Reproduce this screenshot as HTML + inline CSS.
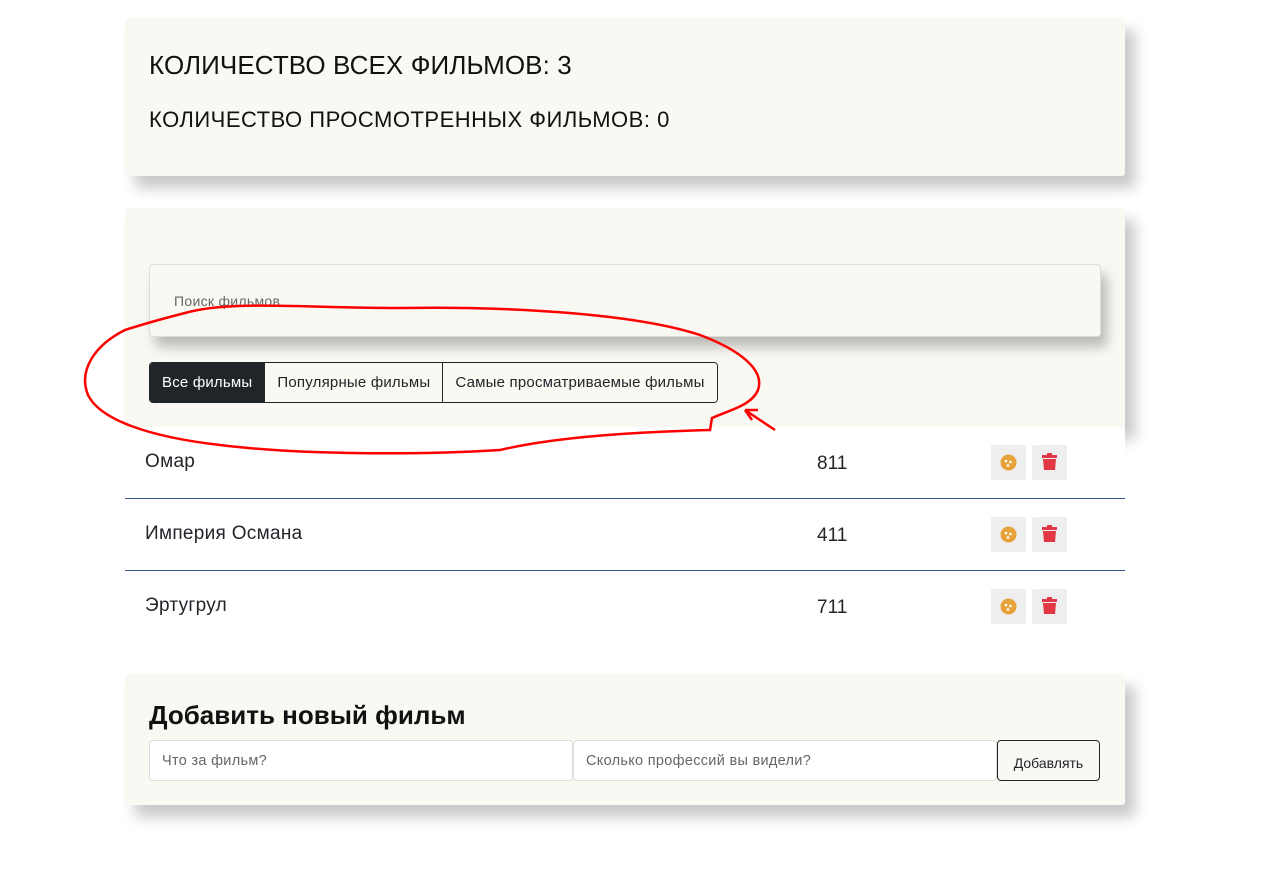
<!DOCTYPE html>
<html><head><meta charset="utf-8"><style>
*{box-sizing:border-box;margin:0;padding:0}
body{width:1283px;height:875px;background:#fff;font-family:"Liberation Sans","DejaVu Sans",sans-serif;color:#212529;position:relative;overflow:hidden}
.card{position:absolute;left:125px;width:1000px;background:#faf8f3;box-shadow:10px 12px 14px rgba(0,0,0,.22);border-radius:3px}
.t1{position:absolute;left:149px;top:50px;font-size:26px;color:#111;letter-spacing:.1px}
.t2{position:absolute;left:149px;top:107px;font-size:22px;color:#111;letter-spacing:.5px}
.search{position:absolute;left:149px;top:264px;width:952px;height:73px;background:#faf8f3;border:1px solid #dcdcdc;border-radius:4px;box-shadow:6px 10px 12px rgba(0,0,0,.25);font-size:14px;color:#666;padding:28px 0 0 24px;letter-spacing:.3px}
.btns{position:absolute;left:149px;top:362px;height:41px;display:flex;border:1px solid #212529;border-radius:4px;overflow:hidden;font-size:15px;letter-spacing:.2px}
.btns div{padding:0 12px;line-height:39px;border-left:1px solid #212529;background:#faf8f3}
.btns div:first-child{background:#212529;color:#fff;border-left:none}
.row{position:absolute;left:125px;width:1000px;height:72px;background:#fff}
.row .n{position:absolute;left:20px;top:24px;font-size:19px;letter-spacing:.3px}
.row .v{position:absolute;left:692px;top:26px;font-size:19px}
.ib{position:absolute;top:18px;width:35px;height:35px;background:#eee;border-radius:2px}
.line{position:absolute;left:125px;width:1000px;height:1px;background:#3a5a8f}
.h{position:absolute;left:149px;top:700px;font-size:26px;font-weight:bold;color:#111}
.in{position:absolute;top:740px;height:41px;background:#fff;border:1px solid #ddd;border-radius:4px;font-size:14.5px;color:#666;padding:12px 0 0 12px;letter-spacing:.3px}
.add{position:absolute;left:997px;top:740px;width:103px;height:41px;border:1px solid #212529;border-radius:4px;font-size:14px;text-align:center;line-height:44px;background:#faf8f3}
</style></head><body>
<div class="card" style="top:18px;height:158px"></div>
<div class="t1">КОЛИЧЕСТВО ВСЕХ ФИЛЬМОВ: 3</div>
<div class="t2">КОЛИЧЕСТВО ПРОСМОТРЕННЫХ ФИЛЬМОВ: 0</div>
<div class="card" style="top:208px;height:220px"></div>
<div class="search">Поиск фильмов</div>
<div class="btns"><div>Все фильмы</div><div>Популярные фильмы</div><div>Самые просматриваемые фильмы</div></div>

<div class="row" style="top:427px"><div class="n">Омар</div><div class="v">811</div>
<div class="ib" style="left:866px"><svg width="35" height="35"><circle cx="17.5" cy="17.5" r="8" fill="#e8a23a"/><circle cx="15" cy="16" r="1.3" fill="#fff"/><circle cx="19.5" cy="17" r="1.3" fill="#fff"/><circle cx="17" cy="20.5" r="1.3" fill="#fff"/></svg></div>
<div class="ib" style="left:907px"><svg width="35" height="35"><rect x="10" y="10" width="15" height="3" fill="#e23744"/><rect x="15" y="8" width="5" height="3" fill="#e23744"/><path d="M11 14h13l-1 11h-11z" fill="#e23744"/></svg></div></div>
<div class="line" style="top:498px"></div>
<div class="row" style="top:499px"><div class="n">Империя Османа</div><div class="v">411</div>
<div class="ib" style="left:866px"><svg width="35" height="35"><circle cx="17.5" cy="17.5" r="8" fill="#e8a23a"/><circle cx="15" cy="16" r="1.3" fill="#fff"/><circle cx="19.5" cy="17" r="1.3" fill="#fff"/><circle cx="17" cy="20.5" r="1.3" fill="#fff"/></svg></div>
<div class="ib" style="left:907px"><svg width="35" height="35"><rect x="10" y="10" width="15" height="3" fill="#e23744"/><rect x="15" y="8" width="5" height="3" fill="#e23744"/><path d="M11 14h13l-1 11h-11z" fill="#e23744"/></svg></div></div>
<div class="line" style="top:570px"></div>
<div class="row" style="top:571px"><div class="n">Эртугрул</div><div class="v">711</div>
<div class="ib" style="left:866px"><svg width="35" height="35"><circle cx="17.5" cy="17.5" r="8" fill="#e8a23a"/><circle cx="15" cy="16" r="1.3" fill="#fff"/><circle cx="19.5" cy="17" r="1.3" fill="#fff"/><circle cx="17" cy="20.5" r="1.3" fill="#fff"/></svg></div>
<div class="ib" style="left:907px"><svg width="35" height="35"><rect x="10" y="10" width="15" height="3" fill="#e23744"/><rect x="15" y="8" width="5" height="3" fill="#e23744"/><path d="M11 14h13l-1 11h-11z" fill="#e23744"/></svg></div></div>

<div class="card" style="top:674px;height:131px"></div>
<div class="h">Добавить новый фильм</div>
<div class="in" style="left:149px;width:424px">Что за фильм?</div>
<div class="in" style="left:573px;width:424px">Сколько профессий вы видели?</div>
<div class="add">Добавлять</div>

<svg width="1283" height="875" style="position:absolute;left:0;top:0" fill="none" stroke="#f00" stroke-width="2.5">
<path d="M185 313 C230 300 300 308 400 308 C520 306 640 315 700 335 C740 350 765 370 758 390 C752 405 730 410 712 418 L710 430 C640 432 560 436 500 450 C420 455 300 455 220 445 C150 437 100 420 88 395 C78 370 95 345 125 330 C150 322 165 318 185 313"/>
<path d="M775 430 L745 410 M745 410 L758 410 M745 410 L752 420"/>
</svg>
</body></html>
